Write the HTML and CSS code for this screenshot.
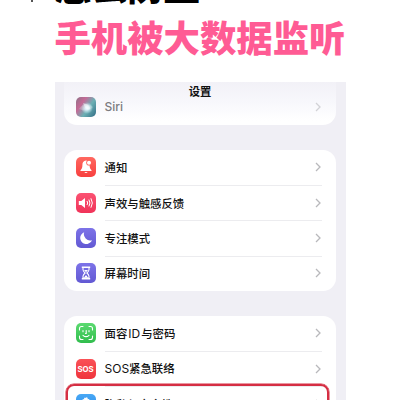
FILE: index.html
```
<!DOCTYPE html>
<html lang="zh-CN">
<head>
<meta charset="utf-8">
<title>设置</title>
<link rel="stylesheet" href="styles.css">
</head>
<body>
<header class="headline">
  <div class="line dark"><i class="tick"></i>怎么防止</div>
  <div class="line pink">手机被大数据监听</div>
</header>
<main class="phone">
  <div class="navbar">设置</div>
  <section class="card card-siri">
    <div class="row">
      <span class="icon siri"><svg viewBox="0 0 20 20"><path d="M3 12Q9 3 17 10Q12 16 3 12Z" fill="#fff" opacity=".22"/><path d="M7 6Q15 8 14 12Q10 14 7 6Z" fill="#fff" opacity=".45"/></svg></span>
      <span class="label latin">Siri</span>
      <svg class="chev" viewBox="0 0 6 10"><path d="M1 1l4 4-4 4"/></svg>
    </div>
  </section>
  <section class="card">
    <div class="row">
      <span class="icon red"><svg viewBox="0 0 20 20"><path d="M10 3.5C7.3 3.7 6.4 5.7 6.4 8C6.4 11.3 5.7 11.8 4.5 13.2V14H15.5V13.2C14.3 11.8 13.6 11.3 13.6 8C13.6 5.7 12.6 3.6 10 3.5ZM8.3 14.9Q10 17.2 11.7 14.9Z" fill="#fff"/><circle cx="13" cy="5.8" r="2.8" fill="#ff6058"/><circle cx="13" cy="5.8" r="2" fill="#fff"/></svg></span>
      <span class="label">通知</span>
      <svg class="chev" viewBox="0 0 6 10"><path d="M1 1l4 4-4 4"/></svg>
    </div>
    <div class="row">
      <span class="icon rose"><svg viewBox="0 0 20 20"><path d="M2.8 8H5.3L9 5V15L5.3 12H2.8Z" fill="#fff"/><path d="M11 8Q12.3 10 11 12M12.9 6.6Q15 10 12.9 13.4M14.9 5.3Q17.8 10 14.9 14.7" fill="none" stroke="#fff" stroke-width="1"/></svg></span>
      <span class="label">声效与触感反馈</span>
      <svg class="chev" viewBox="0 0 6 10"><path d="M1 1l4 4-4 4"/></svg>
    </div>
    <div class="row">
      <span class="icon violet"><svg viewBox="0 0 20 20"><path d="M8.2 4.2A6.1 6.1 0 1 0 16 12.2A6.3 6.3 0 0 1 8.2 4.2Z" fill="#fff"/></svg></span>
      <span class="label">专注模式</span>
      <svg class="chev" viewBox="0 0 6 10"><path d="M1 1l4 4-4 4"/></svg>
    </div>
    <div class="row">
      <span class="icon violet"><svg viewBox="0 0 20 20"><path d="M5.8 3.5H14.2V5.1H5.8ZM5.8 14.9H14.2V16.5H5.8Z" fill="#fff"/><path d="M7 5V6.7Q7.2 8.3 9.1 10Q7.2 11.7 7 13.3V15H13V13.3Q12.8 11.7 10.9 10Q12.8 8.3 13 6.7V5" fill="none" stroke="#fff" stroke-width="1.1"/><path d="M8 7H12L10 9.3ZM7.8 14.8L10 12L12.2 14.8Z" fill="#fff"/></svg></span>
      <span class="label">屏幕时间</span>
      <svg class="chev" viewBox="0 0 6 10"><path d="M1 1l4 4-4 4"/></svg>
    </div>
  </section>
  <section class="card">
    <div class="row">
      <span class="icon green"><svg viewBox="0 0 20 20"><g fill="none" stroke="#fff" stroke-width="1.1" stroke-linecap="round"><path d="M3.5 7V5.5Q3.5 3.5 5.5 3.5H7M13 3.5H14.5Q16.5 3.5 16.5 5.5V7M16.5 13V14.5Q16.5 16.5 14.5 16.5H13M7 16.5H5.5Q3.5 16.5 3.5 14.5V13M7 7.5V8.7M13 7.5V8.7M10.2 7.5V10.5H9.5M7 12.3Q10 15 13 12.3"/></g></svg></span>
      <span class="label">面容<span class="latin spaced">ID</span>与密码</span>
      <svg class="chev" viewBox="0 0 6 10"><path d="M1 1l4 4-4 4"/></svg>
    </div>
    <div class="row">
      <span class="icon crimson">SOS</span>
      <span class="label"><span class="latin">SOS</span>紧急联络</span>
      <svg class="chev" viewBox="0 0 6 10"><path d="M1 1l4 4-4 4"/></svg>
    </div>
    <div class="row privacy">
      <span class="icon blue"><svg viewBox="0 0 20 20"><path d="M6 17L4.5 9.5Q5.5 8 6.5 9.5V5.5Q7.3 4.3 8.1 5.5V4.2Q9 3 9.8 4.2V3.7Q10.8 2.7 11.7 4V5.3Q12.8 4.3 13.5 5.7V10L15 9.5L14 17Z" fill="#fff"/></svg></span>
      <span class="label">隐私与安全性</span>
      <svg class="chev" viewBox="0 0 6 10"><path d="M1 1l4 4-4 4"/></svg>
      <i class="highlight"></i>
    </div>
  </section>
</main>
</body>
</html>
```
FILE: styles.css
```
* { box-sizing: border-box; }
html, body { margin: 0; height: 400px; overflow: hidden; background: #fff; }
body { font-family: "Noto Sans CJK SC", sans-serif; color: #111; }
.headline { height: 82px; padding-left: 54.4px; overflow: hidden; }
.line { position: relative; height: 40px; font-size: 36.4px; line-height: 40px; font-weight: 900; white-space: nowrap; }
.dark { margin-top: -35px; color: #000; }
.pink { margin-top: 10.5px; color: #ff5b94; }
.tick { position: absolute; left: -23px; top: 35px; width: 2px; height: 2px; background: #555; }
.phone { width: 291px; height: 318px; margin-left: 54.5px; padding: 0 10px 0 9.5px; background: #f0eff5; overflow: hidden; position: relative; }
.navbar { position: absolute; left: 0; top: 0; width: 100%; height: 19px; text-align: center; font-size: 11.3px; line-height: 19px; font-weight: 700; z-index: 1; }
.card { background: #fff; border-radius: 13px; margin-bottom: 24.5px; padding-left: 11.5px; overflow: hidden; }
.card-siri { height: 43px; padding-top: 7.5px; border-radius: 0 0 13px 13px; background: linear-gradient(#f2f1f7, #f8f8fc 50%, #fff 90%); }
.row { height: 35.4px; display: flex; align-items: center; position: relative; }
.row + .row::before { content: ""; position: absolute; left: 29px; right: 14px; top: 0; height: 1px; background: #ececef; }
.icon { width: 20px; height: 20px; border-radius: 5px; flex: none; display: flex; align-items: center; justify-content: center; }
.icon svg { width: 20px; height: 20px; display: block; }
.label { margin-left: 9px; flex: 1; font-size: 11.4px; line-height: 18px; font-weight: 500; white-space: nowrap; }
.latin { font-family: Inter, sans-serif; font-size: 12px; font-weight: 400; }
.spaced { margin: 0 1px; }
.chev { width: 6px; height: 10px; margin-right: 14.5px; fill: none; stroke: #b8b8bc; stroke-width: 1.3; }
.card-siri .label { color: #7c7c80; font-size: 12px; font-weight: 500; }
.card-siri .chev { stroke: #d2d2d6; }
.siri { background: radial-gradient(circle at 55% 55%, #dff5ff 0 8%, transparent 38%), linear-gradient(125deg, #8d7186 0%, #c46a96 30%, #6bb0b4 60%, #316b84 100%); }
.red { background: linear-gradient(#ff6860, #f8403f); }
.rose { background: linear-gradient(#fb5272, #f03359); }
.violet { background: linear-gradient(#7d73e8, #6259d3); }
.green { background: linear-gradient(#5bda70, #31bd4d); }
.crimson { background: linear-gradient(#fa5257, #ef343c); color: #fff; font: 700 7.8px/20px Inter, sans-serif; }
.blue { background: linear-gradient(#48a8f5, #2786ea); }
.highlight { position: absolute; left: -9.5px; top: -2.5px; width: 262.5px; height: 39px; border: 2px solid #d52e43; border-radius: 8px; box-shadow: 0 0 0 .5px #d52e43; }
```
